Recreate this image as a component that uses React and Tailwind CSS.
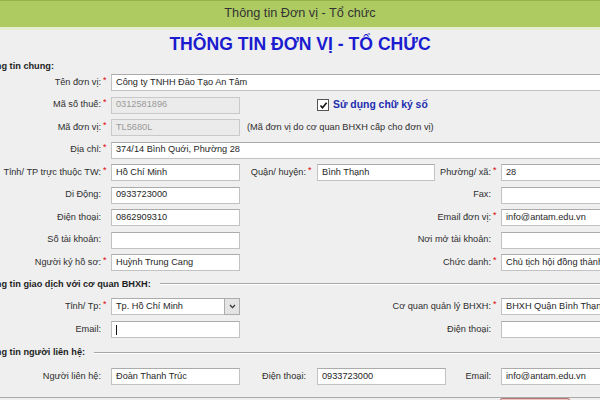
import React from "react";

const Label = ({ className = "", req, children }) => (
  <div
    className={`flex shrink-0 justify-end items-center whitespace-nowrap text-[#2e2e2e] ${className}`}
  >
    <span>{children}</span>
    <span className="w-[7px] self-start pl-[2px] text-[9px] leading-[9px] text-[#e00000]">
      {req ? "*" : ""}
    </span>
  </div>
);

const Field = ({ className = "", value = "", disabled, children }) => (
  <div
    className={`h-[17px] shrink-0 flex items-center px-[4px] border whitespace-nowrap overflow-hidden ${
      disabled
        ? "bg-[#ebebeb] border-[#c9c9c9] text-[#9a9a9a]"
        : "bg-white border-[#c2c2c2] border-t-[#ababab] text-[#262626]"
    } ${className}`}
  >
    {value}
    {children}
  </div>
);

const Legend = ({ children }) => (
  <div className="flex items-center">
    <span className="-ml-[21px] whitespace-nowrap font-bold text-[#1e1e1e]">
      {children}
    </span>
    <div className="flex-1 ml-[9px] border-t border-[#a6a6a6] border-b border-b-white" />
  </div>
);

const Row = ({ children }) => (
  <div className="flex items-center h-[17px]">{children}</div>
);

export default function App() {
  return (
    <div
      className="w-[600px] h-[400px] overflow-hidden bg-[#efefef] text-[9.2px]"
      style={{ fontFamily: '"Liberation Sans", Arial, sans-serif' }}
    >
      {/* Title bar */}
      <div className="h-[27px] bg-[#aecb62] border-t border-[#93b247] flex items-center justify-center text-[12.7px] text-[#333]">
        Thông tin Đơn vị - Tổ chức
      </div>
      <div className="h-[3px] bg-[#e6eed4]" />

      {/* Heading */}
      <div className="h-[29px] flex items-center justify-center text-[17.6px] font-bold text-[#1b1bcf]">
        THÔNG TIN ĐƠN VỊ - TỔ CHỨC
      </div>

      {/* Thông tin chung */}
      <div className="h-[15px] flex items-center">
        <span className="-ml-[21px] whitespace-nowrap font-bold text-[#1e1e1e]">
          Thông tin chung:
        </span>
      </div>

      <div className="flex flex-col gap-[5.5px]">
        <Row>
          <Label className="w-[108px]" req>Tên đơn vị:</Label>
          <Field className="ml-[3px] w-[520px]" value="Công ty TNHH Đào Tạo An Tâm" />
        </Row>
        <Row>
          <Label className="w-[108px]" req>Mã số thuế:</Label>
          <Field className="ml-[3px] w-[129px]" value="0312581896" disabled />
          <div className="ml-[77px] w-[12px] h-[12px] shrink-0 bg-white border border-[#555] flex items-center justify-center">
            <svg width="9" height="9" viewBox="0 0 9 9">
              <path d="M1.5 4.5 L3.5 6.8 L7.6 1.8" fill="none" stroke="#111" strokeWidth="1.6" />
            </svg>
          </div>
          <span className="ml-[4px] whitespace-nowrap font-bold text-[10.4px] text-[#1c2db0]">
            Sử dụng chữ ký số
          </span>
        </Row>
        <Row>
          <Label className="w-[108px]" req>Mã đơn vị:</Label>
          <Field className="ml-[3px] w-[129px]" value="TL5680L" disabled />
          <span className="ml-[7px] whitespace-nowrap text-[#2e2e2e]">
            (Mã đơn vị do cơ quan BHXH cấp cho đơn vị)
          </span>
        </Row>
        <Row>
          <Label className="w-[108px]" req>Địa chỉ:</Label>
          <Field className="ml-[3px] w-[520px]" value="374/14 Bình Quới, Phường 28" />
        </Row>
        <Row>
          <Label className="w-[108px]" req>Tỉnh/ TP trực thuộc TW:</Label>
          <Field className="ml-[3px] w-[129px]" value="Hồ Chí Minh" />
          <Label className="w-[73px]" req>Quận/ huyện:</Label>
          <Field className="ml-[4px] w-[118px]" value="Bình Thạnh" />
          <Label className="w-[63px]" req>Phường/ xã:</Label>
          <Field className="ml-[3px] w-[140px]" value="28" />
        </Row>
        <Row>
          <Label className="w-[108px]">Di Động:</Label>
          <Field className="ml-[3px] w-[129px]" value="0933723000" />
          <Label className="w-[258px]">Fax:</Label>
          <Field className="ml-[3px] w-[140px]" />
        </Row>
        <Row>
          <Label className="w-[108px]">Điện thoại:</Label>
          <Field className="ml-[3px] w-[129px]" value="0862909310" />
          <Label className="w-[258px]" req>Email đơn vị:</Label>
          <Field className="ml-[3px] w-[140px]" value="info@antam.edu.vn" />
        </Row>
        <Row>
          <Label className="w-[108px]">Số tài khoản:</Label>
          <Field className="ml-[3px] w-[129px]" />
          <Label className="w-[258px]">Nơi mở tài khoản:</Label>
          <Field className="ml-[3px] w-[140px]" />
        </Row>
        <Row>
          <Label className="w-[108px]" req>Người ký hồ sơ:</Label>
          <Field className="ml-[3px] w-[129px]" value="Huỳnh Trung Cang" />
          <Label className="w-[258px]" req>Chức danh:</Label>
          <Field className="ml-[3px] w-[140px]" value="Chủ tịch hội đồng thành viên" />
        </Row>
      </div>

      {/* Giao dịch với cơ quan BHXH */}
      <div className="h-[27px] flex flex-col justify-center">
        <Legend>Thông tin giao dịch với cơ quan BHXH:</Legend>
      </div>
      <div className="flex flex-col gap-[6px]">
        <Row>
          <Label className="w-[108px]" req>Tỉnh/ Tp:</Label>
          <div className="ml-[3px] w-[129px] h-[17px] shrink-0 flex bg-white border border-[#c2c2c2] border-t-[#ababab]">
            <span className="flex-1 flex items-center pl-[4px] whitespace-nowrap text-[#262626]">
              Tp. Hồ Chí Minh
            </span>
            <div className="w-[16px] -my-px -mr-px flex items-center justify-center bg-[#e4e4e4] border border-[#adadad]">
              <svg width="7" height="5" viewBox="0 0 7 5">
                <path d="M1 1 L3.5 3.6 L6 1" fill="none" stroke="#333" strokeWidth="1.3" />
              </svg>
            </div>
          </div>
          <Label className="w-[258px]" req>Cơ quan quản lý BHXH:</Label>
          <Field className="ml-[3px] w-[140px]" value="BHXH Quận Bình Thạnh" />
        </Row>
        <Row>
          <Label className="w-[108px]">Email:</Label>
          <Field className="ml-[3px] w-[129px]">
            <span className="w-px h-[10px] bg-[#111]" />
          </Field>
          <Label className="w-[258px]">Điện thoại:</Label>
          <Field className="ml-[3px] w-[140px]" />
        </Row>
      </div>

      {/* Người liên hệ */}
      <div className="h-[30px] flex flex-col justify-center">
        <Legend>Thông tin người liên hệ:</Legend>
      </div>
      <Row>
        <Label className="w-[108px]">Người liên hệ:</Label>
        <Field className="ml-[3px] w-[129px]" value="Đoàn Thanh Trúc" />
        <Label className="w-[73px]">Điện thoại:</Label>
        <Field className="ml-[4px] w-[129px]" value="0933723000" />
        <Label className="w-[52px]">Email:</Label>
        <Field className="ml-[3px] w-[140px]" value="info@antam.edu.vn" />
      </Row>

      {/* Footer */}
      <div className="mt-[12px] flex border-t border-[#a9a9a9]">
        <div className="ml-[500px] w-[70px] h-[20px] shrink-0 bg-[#ecc4c4] border border-[#b87777] rounded-[2px]" />
      </div>
    </div>
  );
}
